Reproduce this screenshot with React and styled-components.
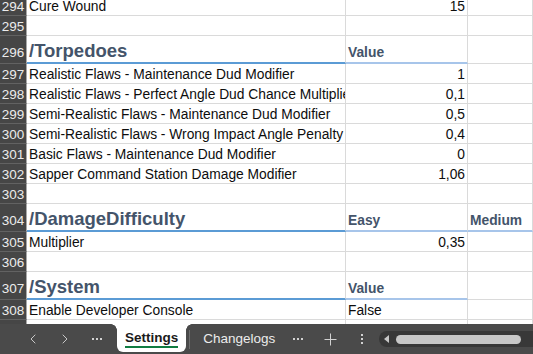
import React from "react";
import styled, { createGlobalStyle } from "styled-components";
import { ChevronLeft, ChevronRight } from "lucide-react";

const GlobalStyle = createGlobalStyle`
  body {
    margin: 0;
    overflow: hidden;
    font-family: "Liberation Sans", Arial, sans-serif;
  }
`;

const Page = styled.div`
  width: 533px;
  height: 354px;
  display: flex;
  flex-direction: column;
  overflow: hidden;
  background: #fff;
`;

const Sheet = styled.div`
  flex: 1;
  overflow: hidden;
`;

const SheetInner = styled.div`
  margin-top: -4px;
`;

const Row = styled.div`
  display: grid;
  grid-template-columns: 27px 319px 122px 1fr;
  height: ${(p) => (p.$heading ? 28 : 20)}px;
`;

const RowHeader = styled.div`
  box-sizing: border-box;
  background: #464646;
  color: #ececec;
  border-right: 1px solid #a8a8a8;
  border-bottom: 1px solid #626262;
  font-size: 13.5px;
  line-height: 17px;
  display: flex;
  align-items: flex-end;
  justify-content: center;
  padding-bottom: ${(p) => (p.$heading ? 2 : 0)}px;
`;

const Cell = styled.div`
  box-sizing: border-box;
  min-width: 0;
  overflow: hidden;
  white-space: nowrap;
  display: flex;
  align-items: flex-end;
  justify-content: ${(p) => (p.$num ? "flex-end" : "flex-start")};
  padding: 0 2px ${(p) => p.$pb || 0}px 2px;
  border-right: 1px solid #dadada;
  border-bottom: ${(p) =>
    p.$under ? `2px solid ${p.$under}` : "1px solid #dadada"};
  font-size: 13.8px;
  line-height: 17px;
  color: #0d0d0d;
`;

const Heading = styled.span`
  font-size: 18.5px;
  line-height: 22px;
  font-weight: bold;
  color: #44546a;
`;

const SubHeading = styled.span`
  font-weight: bold;
  color: #44546a;
`;

const TabBar = styled.div`
  height: 30px;
  flex: none;
  background: #4a4a4a;
  display: flex;
  align-items: center;
  color: #e8e8e8;
  font-size: 13.5px;
`;

const NavGroup = styled.div`
  display: flex;
  padding-left: 17px;
  margin-right: 4px;
`;

const IconButton = styled.div`
  width: 32px;
  height: 30px;
  display: flex;
  align-items: center;
  justify-content: center;
  color: #d2d2d2;
`;

const SheetTab = styled.div`
  position: relative;
  align-self: flex-start;
  height: ${(p) => (p.$active ? 28 : 30)}px;
  box-sizing: border-box;
  display: flex;
  align-items: center;
  padding: ${(p) => (p.$active ? "0 8px" : "0 7px 0 13px")};
  background: ${(p) => (p.$active ? "#fff" : "transparent")};
  color: ${(p) => (p.$active ? "#1a1a1a" : "#ececec")};
  font-weight: ${(p) => (p.$active ? "bold" : "normal")};
  border-radius: 0 0 6px 6px;

  ${(p) =>
    p.$active &&
    `
    &::before, &::after {
      content: "";
      position: absolute;
      top: 0;
      width: 6px;
      height: 6px;
    }
    &::before {
      left: -6px;
      background: radial-gradient(circle at 0 100%, #4a4a4a 5.5px, #fff 6px);
    }
    &::after {
      right: -6px;
      background: radial-gradient(circle at 100% 100%, #4a4a4a 5.5px, #fff 6px);
    }
  `}
`;

const TabLabel = styled.span`
  padding-top: 2px;
  border-bottom: ${(p) => (p.$active ? "2px solid #107c41" : "2px solid transparent")};
  line-height: 16px;
`;

const Divider = styled.div`
  width: 1px;
  height: 20px;
  margin-left: 3px;
  background: #6e6e6e;
`;

const ScrollTrack = styled.div`
  flex: 1;
  height: 16px;
  margin-left: 1px;
  margin-right: -20px;
  border-radius: 8px;
  background: #383838;
  display: flex;
  align-items: center;
  padding-left: 5px;
`;

const ArrowLeft = styled.div`
  width: 0;
  height: 0;
  border-top: 4px solid transparent;
  border-bottom: 4px solid transparent;
  border-right: 5px solid #c8c8c8;
  margin-right: 7px;
`;

const Thumb = styled.div`
  width: 125px;
  height: 9px;
  border-radius: 5px;
  background: #c8c8c8;
`;

const Dots = ({ vertical }) => (
  <svg width="12" height="12" viewBox="0 0 12 12">
    {[2, 6, 10].map((v) => (
      <rect
        key={v}
        x={vertical ? 5 : v - 1}
        y={vertical ? v - 1 : 5}
        width="2"
        height="2"
        fill="currentColor"
      />
    ))}
  </svg>
);

const PlusIcon = () => (
  <svg width="13" height="13" viewBox="0 0 13 13">
    <path d="M6.5 0.5v12M0.5 6.5h12" stroke="currentColor" strokeWidth="1" />
  </svg>
);

const ACCENT = "#5b9bd5";
const ACCENT_LIGHT = "#a7c5ea";

const rows = [
  { n: 294, a: "Cure Wound", b: "15" },
  { n: 295 },
  { n: 296, heading: "/Torpedoes", bh: "Value" },
  { n: 297, a: "Realistic Flaws - Maintenance Dud Modifier", b: "1" },
  { n: 298, a: "Realistic Flaws - Perfect Angle Dud Chance Multiplier", b: "0,1" },
  { n: 299, a: "Semi-Realistic Flaws - Maintenance Dud Modifier", b: "0,5" },
  { n: 300, a: "Semi-Realistic Flaws - Wrong Impact Angle Penalty", b: "0,4" },
  { n: 301, a: "Basic Flaws - Maintenance Dud Modifier", b: "0" },
  { n: 302, a: "Sapper Command Station Damage Modifier", b: "1,06" },
  { n: 303 },
  { n: 304, heading: "/DamageDifficulty", bh: "Easy", ch: "Medium" },
  { n: 305, a: "Multiplier", b: "0,35" },
  { n: 306 },
  { n: 307, heading: "/System", bh: "Value" },
  { n: 308, a: "Enable Developer Console", text: "False" },
  // only a sliver of the next row shows above the tab bar
  { n: 309, hidden: true },
];

function SheetRow({ row }) {
  if (row.heading) {
    return (
      <Row $heading>
        <RowHeader $heading>{row.n}</RowHeader>
        <Cell $under={ACCENT}>
          <Heading>{row.heading}</Heading>
        </Cell>
        <Cell $under={ACCENT_LIGHT} $pb={1}>
          <SubHeading>{row.bh}</SubHeading>
        </Cell>
        <Cell $under={row.ch ? ACCENT_LIGHT : null} $pb={row.ch ? 1 : 0}>
          {row.ch && <SubHeading>{row.ch}</SubHeading>}
        </Cell>
      </Row>
    );
  }
  return (
    <Row>
      <RowHeader>{row.hidden ? "" : row.n}</RowHeader>
      <Cell>{row.a}</Cell>
      <Cell $num={!!row.b}>{row.b || row.text}</Cell>
      <Cell />
    </Row>
  );
}

export default function App() {
  return (
    <Page>
      <GlobalStyle />
      <Sheet>
        <SheetInner>
          {rows.map((r) => (
            <SheetRow key={r.n} row={r} />
          ))}
        </SheetInner>
      </Sheet>
      <TabBar>
        <NavGroup>
          <IconButton>
            <ChevronLeft size={16} strokeWidth={1.4} />
          </IconButton>
          <IconButton>
            <ChevronRight size={16} strokeWidth={1.4} />
          </IconButton>
          <IconButton>
            <Dots />
          </IconButton>
        </NavGroup>
        <SheetTab $active>
          <TabLabel $active>Settings</TabLabel>
        </SheetTab>
        <Divider />
        <SheetTab>
          <TabLabel>Changelogs</TabLabel>
        </SheetTab>
        <IconButton>
          <Dots />
        </IconButton>
        <IconButton>
          <PlusIcon />
        </IconButton>
        <IconButton>
          <Dots vertical />
        </IconButton>
        <ScrollTrack>
          <ArrowLeft />
          <Thumb />
        </ScrollTrack>
      </TabBar>
    </Page>
  );
}
